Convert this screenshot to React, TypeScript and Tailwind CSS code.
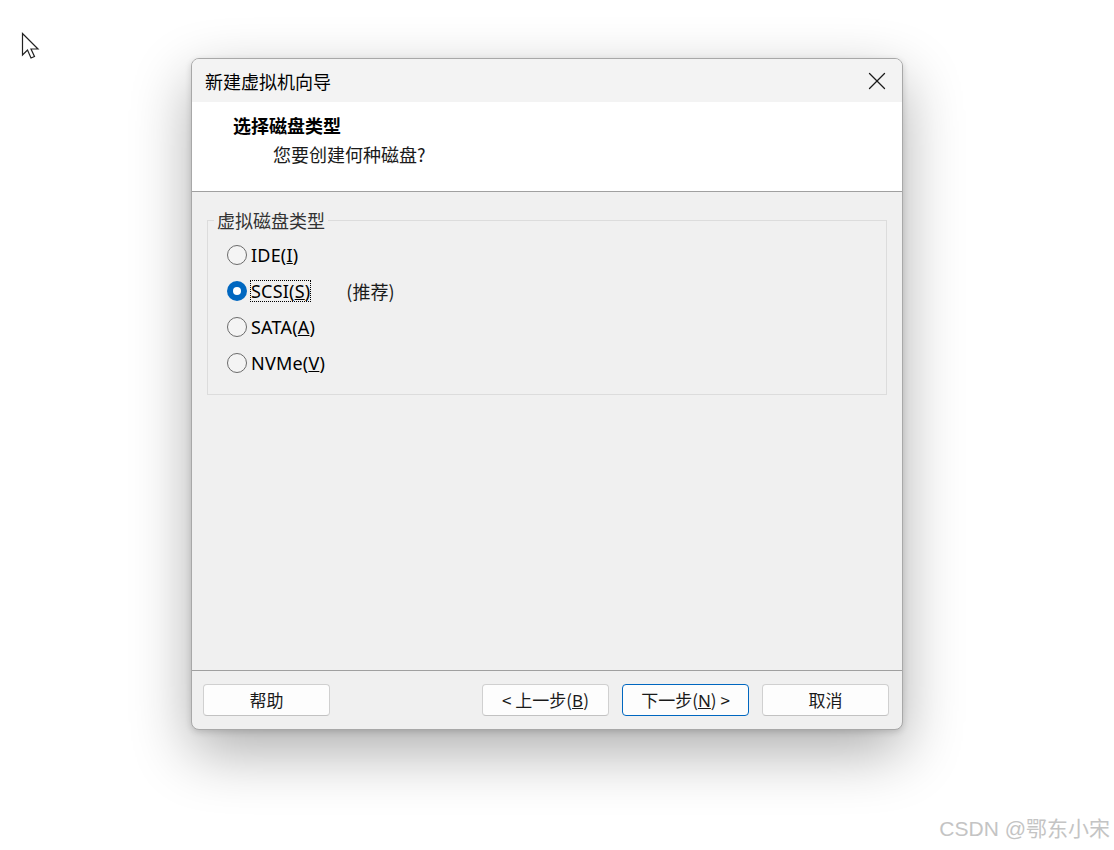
import { X } from "lucide-react";

const ui = '"Segoe UI", "Noto Sans", "Noto Sans CJK SC", sans-serif';
const cjk = '"Noto Sans CJK SC", "Noto Sans", sans-serif';

const Radio = ({ checked }: { checked?: boolean }) =>
    checked ? (
        <span className="w-5 h-5 rounded-full bg-[#0067c0] grid place-items-center shrink-0">
            <span className="w-2 h-2 rounded-full bg-white" />
        </span>
    ) : (
        <span className="w-5 h-5 rounded-full border border-[#6b6b6b] bg-[#f4f4f4] shrink-0" />
    );

const Option = ({
    label,
    hotkey,
    checked,
    extra,
}: {
    label: string;
    hotkey: string;
    checked?: boolean;
    extra?: string;
}) => (
    <div className="flex items-center h-9 pl-[19px]">
        <Radio checked={checked} />
        <span
            className={
                "ml-[4px] text-[18px] leading-[20px] text-black tracking-[0.2px] " +
                (checked ? "outline outline-1 outline-dotted outline-black" : "")
            }
            style={{ fontFamily: ui }}
        >
            {label}(<u>{hotkey}</u>)
        </span>
        {extra && (
            <span className="ml-[36px] text-[18px] text-[#1a1a1a]" style={{ fontFamily: cjk }}>
                {extra}
            </span>
        )}
    </div>
);

const Btn = ({
    children,
    primary,
}: {
    children: React.ReactNode;
    primary?: boolean;
}) => (
    <button
        className={
            "w-[127px] h-8 rounded-[4px] bg-[#fdfdfd] text-[17px] text-[#1a1a1a] border " +
            (primary ? "border-[#0067c0]" : "border-[#d0d0d0] border-b-[#c2c2c2]")
        }
        style={{ fontFamily: cjk }}
    >
        {children}
    </button>
);

const Cursor = () => (
    <svg
        className="absolute left-[21px] top-[32px]"
        width="20"
        height="28"
        viewBox="0 0 20 28"
    >
        <path
            d="M1.5 1.5 L1.5 23 L6.5 18 L10 26 L13.5 24.5 L10 17 L17 17 Z"
            fill="#fff"
            stroke="#222"
            strokeWidth="1.2"
            strokeLinejoin="miter"
        />
    </svg>
);

export default function App() {
    return (
        <div className="relative w-[1114px] h-[850px] bg-white overflow-hidden">
            <Cursor />
            <div className="pt-[58px] pl-[191px]">
                <div className="w-[712px] h-[672px] rounded-[8px] border border-[#a8a8a8] bg-[#f0f0f0] overflow-hidden flex flex-col shadow-[0_22px_60px_rgba(0,0,0,0.32),0_2px_6px_rgba(0,0,0,0.15)]">
                    <div className="h-[43px] bg-[#f3f3f3] flex items-center justify-between shrink-0">
                        <span
                            className="pl-[13px] text-[18px] text-black pt-[1px]"
                            style={{ fontFamily: cjk }}
                        >
                            新建虚拟机向导
                        </span>
                        <X className="mr-[10px] w-[30px] h-[30px] text-[#1a1a1a]" strokeWidth={1} />
                    </div>
                    <div className="h-[90px] bg-white border-b border-[#a0a0a0] shrink-0 pt-[11px]" style={{ fontFamily: cjk }}>
                        <div className="pl-[41px] text-[18px] font-bold leading-[24px] text-black">
                            选择磁盘类型
                        </div>
                        <div className="pl-[81px] mt-[5px] text-[18px] leading-[24px] text-[#1a1a1a]">
                            您要创建何种磁盘?
                        </div>
                    </div>
                    <div className="flex-1 px-[15px] pt-[17px]">
                        <fieldset className="border border-[#dcdcdc] h-[186px] pl-0 pt-[6px] w-[680px]">
                            <legend
                                className="ml-[6px] px-[3px] text-[18px] leading-[22px] text-[#333]"
                                style={{ fontFamily: cjk }}
                            >
                                虚拟磁盘类型
                            </legend>
                            <Option label="IDE" hotkey="I" />
                            <Option label="SCSI" hotkey="S" checked extra="(推荐)" />
                            <Option label="SATA" hotkey="A" />
                            <Option label="NVMe" hotkey="V" />
                        </fieldset>
                    </div>
                    <div className="h-[59px] border-t border-[#a0a0a0] shrink-0 flex items-center pl-[11px] pr-[13px]">
                        <Btn>帮助</Btn>
                        <div className="flex-1" />
                        <div className="flex gap-[13px]">
                            <Btn>
                                &lt; 上一步(<u style={{ fontFamily: ui }}>B</u>)
                            </Btn>
                            <Btn primary>
                                下一步(<u style={{ fontFamily: ui }}>N</u>) &gt;
                            </Btn>
                            <Btn>取消</Btn>
                        </div>
                    </div>
                </div>
            </div>
            <div
                className="absolute right-[4px] bottom-[6px] text-[21px] text-[#c4c4c4]"
                style={{ fontFamily: '"Liberation Sans", "Noto Sans CJK SC", sans-serif' }}
            >
                CSDN @鄂东小宋
            </div>
        </div>
    );
}
